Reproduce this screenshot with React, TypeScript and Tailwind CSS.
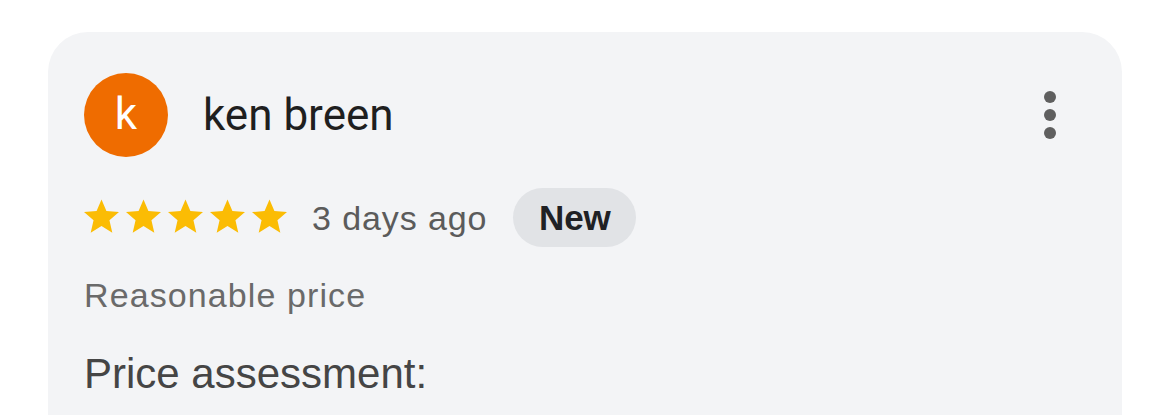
const STAR_PATH =
  "M12 17.27L18.18 21l-1.64-7.03L22 9.24l-7.19-.61L12 2 9.19 8.63 2 9.24l5.46 4.73L5.82 21z";

function Star() {
  return (
    <svg viewBox="2 2 20 19" width="35" height="34" className="shrink-0">
      <path d={STAR_PATH} fill="#fbbc04" />
    </svg>
  );
}

function Kebab() {
  return (
    <svg width="12" height="48" viewBox="0 0 12 48" className="shrink-0">
      <circle cx="6" cy="6" r="6" fill="#5f5f5f" />
      <circle cx="6" cy="24" r="6" fill="#5f5f5f" />
      <circle cx="6" cy="42" r="6" fill="#5f5f5f" />
    </svg>
  );
}

export default function App() {
  const sans = { fontFamily: '"Liberation Sans", Arial, sans-serif' };

  return (
    <div className="w-[1170px] h-[415px] bg-white overflow-hidden pt-8 pl-12 pr-[48px]">
      <div className="bg-[#f3f4f6] rounded-t-[40px] h-[420px] pl-9 pt-[41px] pr-[66px]">
        {/* Header */}
        <div className="flex items-center">
          <div className="w-[84px] h-[84px] rounded-full bg-[#ef6c00] flex items-center justify-center shrink-0">
            <span
              className="text-white text-[44px] leading-none -mt-[2px]"
              style={{ fontFamily: "Roboto, sans-serif" }}
            >
              k
            </span>
          </div>
          <span
            className="ml-[35px] text-[44px] leading-none text-[#1f1f1f]"
            style={{ fontFamily: "Roboto, sans-serif" }}
          >
            ken breen
          </span>
          <div className="ml-auto">
            <Kebab />
          </div>
        </div>

        {/* Rating row */}
        <div className="mt-[31px] flex items-center h-[59px]">
          <div className="flex gap-[7px] -mt-1">
            <Star />
            <Star />
            <Star />
            <Star />
            <Star />
          </div>
          <span
            className="ml-[25px] text-[34px] leading-none tracking-[0.9px] text-[#5b5b5b]"
            style={sans}
          >
            3 days ago
          </span>
          <span
            className="ml-[26px] h-[59px] w-[123px] rounded-full bg-[#e1e3e6] flex items-center justify-center text-[35px] font-bold leading-none text-[#202124]"
            style={sans}
          >
            New
          </span>
        </div>

        {/* Price */}
        <p
          className="mt-[31px] text-[34px] leading-none tracking-[1.1px] text-[#6a6a6a]"
          style={sans}
        >
          Reasonable price
        </p>
        <p
          className="mt-[41px] text-[42px] leading-none text-[#454545]"
          style={sans}
        >
          Price assessment:
        </p>
      </div>
    </div>
  );
}
